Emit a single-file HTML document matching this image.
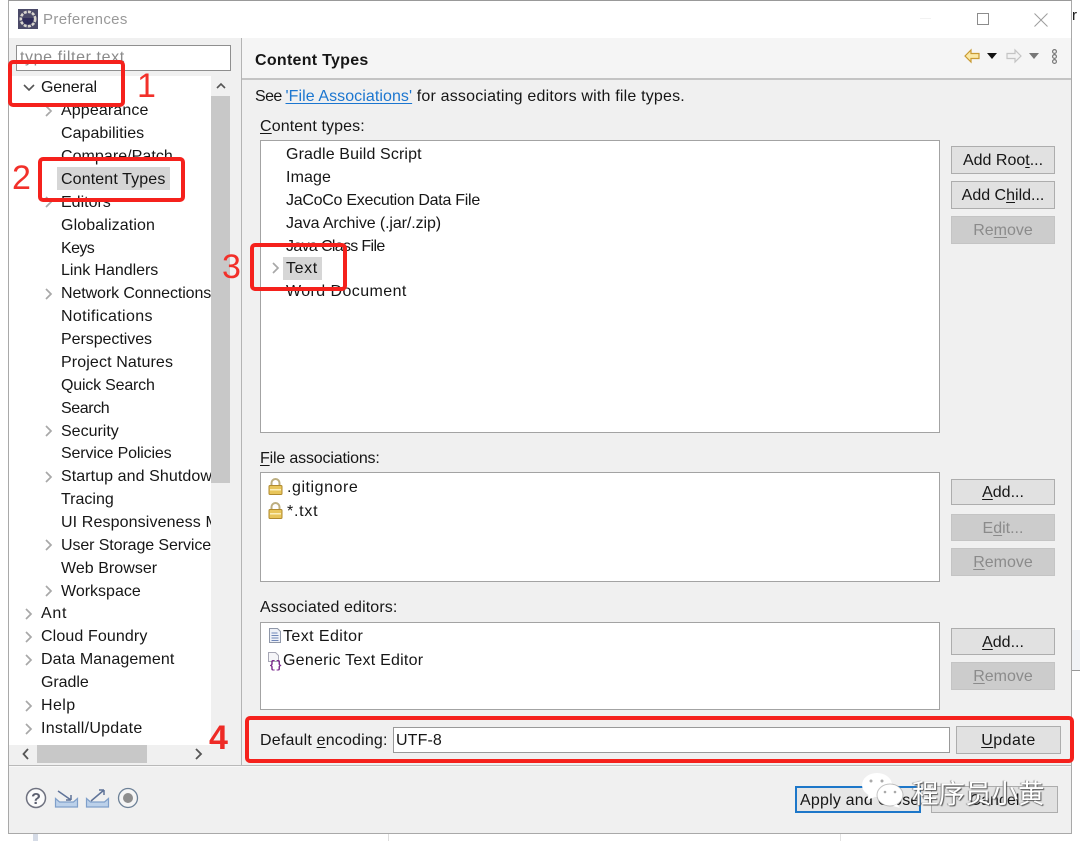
<!DOCTYPE html>
<html><head><meta charset="utf-8"><style>
html,body{margin:0;padding:0;background:#fff;width:1080px;height:841px;overflow:hidden}
body{position:relative;font-family:"Liberation Sans","Noto Sans CJK SC",sans-serif;font-size:16px;color:#161616}
.a{position:absolute;box-sizing:border-box}
.t{position:absolute;white-space:nowrap;line-height:20px;height:20px;letter-spacing:.12px;margin-top:1px}
.box{position:absolute;box-sizing:border-box;background:#fff;border:1px solid #a3a3a3}
.b{position:absolute;box-sizing:border-box;background:#e1e1e1;border:1px solid #adadad;text-align:center;line-height:27px;white-space:nowrap}
.d{background:#cccccc;border-color:#c4c4c4;color:#8b8b8b}
.r{position:absolute;box-sizing:border-box;border:4px solid #f5211c;border-radius:5px}
.n{position:absolute;color:#f2302a;font-size:34px;line-height:36px;white-space:nowrap}
svg{position:absolute;overflow:visible}
u{text-underline-offset:2px}
</style></head><body>
<!-- background behind window -->
<div class="a" style="left:33px;top:833px;width:5px;height:8px;background:#d5dbe6"></div>
<div class="a" style="left:388px;top:833px;width:1px;height:8px;background:#ddd"></div>
<div class="a" style="left:840px;top:833px;width:1px;height:8px;background:#e2e2e2"></div>
<div class="a" style="left:1072px;top:630px;width:8px;height:40px;background:#f1f3f6"></div>
<div class="a" style="left:1072px;top:670px;width:8px;height:1px;background:#999"></div>
<!-- window -->
<div class="a" style="left:8px;top:0;width:1064px;height:834px;background:#f0f0f0;border:1px solid #a9a9a9;border-top-color:#999"></div>
<div class="t" style="left:1072px;top:5px;font-size:15px">r</div>
<div class="a" style="left:9px;top:1px;width:1062px;height:37px;background:#fff"></div>
<svg style="left:18px;top:9px" width="20" height="20" viewBox="0 0 20 20"><rect width="20" height="20" fill="#4b4a68"/><circle cx="10" cy="10" r="7.2" fill="none" stroke="#d9d6cf" stroke-width="2.6" stroke-dasharray="3 1.2"/><path d="M4.500 9h11a5.500 5.500 0 0 1-11 2z" fill="#2f2c59"/></svg>
<div class="t" style="left:43px;top:9px;color:#9a9a9a;font-size:15px;letter-spacing:.35px">Preferences</div>
<div class="a" style="left:920px;top:18px;width:11px;height:1px;background:#f2f2f2"></div>
<div class="a" style="left:977px;top:13px;width:12px;height:12px;border:1px solid #8c8c8c"></div>
<svg style="left:1034px;top:13px" width="14" height="14"><path d="M.5.500l13 13M13.500.500l-13 13" stroke="#9d9d9d" fill="none"/></svg>
<!-- left pane -->
<div class="a" style="left:9px;top:38px;width:221px;height:727px;background:#f0f0f0"></div>
<div class="a" style="left:9px;top:76px;width:202px;height:669px;background:#fff"></div>
<div class="box" style="left:16px;top:45px;width:215px;height:26px;border-color:#8f8f8f"></div>
<div class="t" style="left:20px;top:47px;color:#8a8a8a;letter-spacing:.6px">type filter text</div>
<div class="a" style="left:211px;top:76px;width:19px;height:20px;background:#f0f0f0"></div>
<svg style="left:216px;top:82px" width="10" height="8"><path d="M1 6l4-4 4 4" stroke="#555" stroke-width="1.6" fill="none"/></svg>
<div class="a" style="left:211px;top:96px;width:19px;height:387px;background:#c8c8c8"></div>
<div class="a" style="left:57px;top:167px;width:113px;height:23px;background:#d6d6d6"></div>
<div class="a" style="left:9px;top:76px;width:202px;height:669px;overflow:hidden">
<svg style="left:14px;top:8px" width="12" height="8"><path d="M1 1l5 5 5-5" stroke="#555" stroke-width="1.6" fill="none"/></svg>
<div class="t" style="left:32px;top:1px;letter-spacing:-.15px">General</div>
<div class="t" style="left:52px;top:24px">Appearance</div>
<div class="t" style="left:52px;top:47px;letter-spacing:.04px">Capabilities</div>
<div class="t" style="left:52px;top:70px;letter-spacing:.05px">Compare/Patch</div>
<div class="t" style="left:52px;top:93px">Content Types</div>
<div class="t" style="left:52px;top:116px;letter-spacing:0">Editors</div>
<div class="t" style="left:52px;top:139px">Globalization</div>
<div class="t" style="left:52px;top:162px;letter-spacing:-.6px">Keys</div>
<div class="t" style="left:52px;top:184px;letter-spacing:-.05px">Link Handlers</div>
<div class="t" style="left:52px;top:207px;letter-spacing:-.1px">Network Connections</div>
<div class="t" style="left:52px;top:230px;letter-spacing:.36px">Notifications</div>
<div class="t" style="left:52px;top:253px;letter-spacing:-.05px">Perspectives</div>
<div class="t" style="left:52px;top:276px">Project Natures</div>
<div class="t" style="left:52px;top:299px;letter-spacing:-.2px">Quick Search</div>
<div class="t" style="left:52px;top:322px;letter-spacing:-.4px">Search</div>
<div class="t" style="left:52px;top:345px;letter-spacing:0">Security</div>
<div class="t" style="left:52px;top:367px;letter-spacing:-.15px">Service Policies</div>
<div class="t" style="left:52px;top:390px;letter-spacing:.08px">Startup and Shutdown</div>
<div class="t" style="left:52px;top:413px;letter-spacing:0">Tracing</div>
<div class="t" style="left:52px;top:436px">UI Responsiveness Monitoring</div>
<div class="t" style="left:52px;top:459px;letter-spacing:-.1px">User Storage Service</div>
<div class="t" style="left:52px;top:482px;letter-spacing:.04px">Web Browser</div>
<div class="t" style="left:52px;top:505px;letter-spacing:0">Workspace</div>
<div class="t" style="left:32px;top:527px;letter-spacing:.7px">Ant</div>
<div class="t" style="left:32px;top:550px">Cloud Foundry</div>
<div class="t" style="left:32px;top:573px">Data Management</div>
<div class="t" style="left:32px;top:596px;letter-spacing:-.05px">Gradle</div>
<div class="t" style="left:32px;top:619px;letter-spacing:.4px">Help</div>
<div class="t" style="left:32px;top:642px;letter-spacing:.26px">Install/Update</div>
<svg style="left:0;top:1px" width="202" height="669"><g stroke="#a8a8a8" stroke-width="1.7" fill="none"><path d="M37 29l5 5-5 5M37 120l5 5-5 5M37 212l5 5-5 5M37 349l5 5-5 5M37 395l5 5-5 5M37 463l5 5-5 5M37 509l5 5-5 5M17 532l5 5-5 5M17 555l5 5-5 5M17 578l5 5-5 5M17 624l5 5-5 5M17 647l5 5-5 5"/></g></svg>
</div>
<div class="a" style="left:9px;top:745px;width:221px;height:20px;background:#f0f0f0"></div>
<div class="a" style="left:37px;top:745px;width:110px;height:18px;background:#c8c8c8"></div>
<svg style="left:22px;top:748px" width="190" height="12"><path d="M6 1L1.500 6 6 11M174 1l5 5-5 5" stroke="#555" stroke-width="1.8" fill="none"/></svg>
<!-- sash / right pane -->
<div class="a" style="left:241px;top:38px;width:1px;height:727px;background:#b4b4b4"></div>
<div class="a" style="left:242px;top:38px;width:829px;height:41px;background:#f5f5f5"></div>
<div class="a" style="left:242px;top:78px;width:829px;height:2px;background:#c4c4c4"></div>
<div class="t" style="left:255px;top:50px;font-weight:bold;letter-spacing:.28px">Content Types</div>
<svg style="left:964px;top:49px" width="16" height="14" viewBox="0 0 16 14"><path d="M1 7l6-6v3.500h8v5H7V13z" fill="#fbe9a7" stroke="#c99a33" stroke-width="1.200"/></svg>
<svg style="left:987px;top:53px" width="10" height="6"><path d="M0 0h10L5 6z" fill="#111"/></svg>
<svg style="left:1006px;top:49px" width="16" height="14" viewBox="0 0 16 14"><path d="M15 7L9 1v3.500H1v5h8V13z" fill="#f3f3f3" stroke="#c4c4c4" stroke-width="1.200"/></svg>
<svg style="left:1029px;top:53px" width="10" height="6"><path d="M0 0h10L5 6z" fill="#777"/></svg>
<svg style="left:1051px;top:49px" width="7" height="15"><g fill="none" stroke="#777" stroke-width="1.200"><circle cx="3.500" cy="2.500" r="1.900"/><circle cx="3.500" cy="7.500" r="1.900"/><circle cx="3.500" cy="12.500" r="1.900"/></g></svg>
<div class="t" style="left:255px;top:86px;letter-spacing:.19px"><span style="letter-spacing:-.6px">See </span><span style="color:#1b76d0;text-decoration:underline;text-underline-offset:2px;letter-spacing:.07px">'File Associations'</span> for associating editors with file types.</div>
<div class="t" style="left:260px;top:116px"><u>C</u>ontent types:</div>
<div class="box" style="left:260px;top:140px;width:680px;height:293px"></div>
<div class="t" style="left:286px;top:144px">Gradle Build Script</div>
<div class="t" style="left:286px;top:167px">Image</div>
<div class="t" style="left:286px;top:190px;letter-spacing:-.27px">JaCoCo Execution Data File</div>
<div class="t" style="left:286px;top:213px;letter-spacing:-.1px">Java Archive (.jar/.zip)</div>
<div class="t" style="left:286px;top:236px;letter-spacing:-.66px">Java Class File</div>
<div class="a" style="left:283px;top:257px;width:39px;height:23px;background:#d6d6d6"></div>
<div class="t" style="left:286px;top:258px;letter-spacing:.6px">Text</div>
<svg style="left:272px;top:262px" width="8" height="12"><path d="M1 1l5 5-5 5" stroke="#a8a8a8" stroke-width="1.700" fill="none"/></svg>
<div class="t" style="left:286px;top:281px;letter-spacing:.42px">Word Document</div>
<div class="b" style="left:951px;top:146px;width:104px;height:28px">Add Roo<u>t</u>...</div>
<div class="b" style="left:951px;top:181px;width:104px;height:28px">Add C<u>h</u>ild...</div>
<div class="b d" style="left:951px;top:216px;width:104px;height:28px">Re<u>m</u>ove</div>
<div class="t" style="left:260px;top:448px;letter-spacing:-.17px"><u>F</u>ile associations:</div>
<div class="box" style="left:260px;top:472px;width:680px;height:110px"></div>
<svg style="left:268px;top:478px" width="15" height="17" viewBox="0 0 15 17"><path d="M3.500 9V5a4 4 0 0 1 8 0v4" fill="none" stroke="#bcae80" stroke-width="2"/><rect x="1" y="7.500" width="13" height="9" rx="1" fill="#e8c55a" stroke="#b08a2e"/><rect x="2" y="11" width="11" height="1.500" fill="#fbeeb8"/></svg>
<svg style="left:268px;top:502px" width="15" height="17" viewBox="0 0 15 17"><path d="M3.500 9V5a4 4 0 0 1 8 0v4" fill="none" stroke="#bcae80" stroke-width="2"/><rect x="1" y="7.500" width="13" height="9" rx="1" fill="#e8c55a" stroke="#b08a2e"/><rect x="2" y="11" width="11" height="1.500" fill="#fbeeb8"/></svg>
<div class="t" style="left:287px;top:477px;letter-spacing:.55px">.gitignore</div>
<div class="t" style="left:287px;top:501px;letter-spacing:.75px">*.txt</div>
<div class="b" style="left:951px;top:479px;width:104px;height:26px;line-height:26px"><u>A</u>dd...</div>
<div class="b d" style="left:951px;top:514px;width:104px;height:27px"><span>E<u>d</u>it...</span></div>
<div class="b d" style="left:951px;top:548px;width:104px;height:28px"><u>R</u>emove</div>
<div class="t" style="left:260px;top:597px">Associated editors:</div>
<div class="box" style="left:260px;top:622px;width:680px;height:88px"></div>
<svg style="left:269px;top:628px" width="12" height="15" viewBox="0 0 12 15"><path d="M.5.500h8l3 3v11H.5z" fill="#eef1f8" stroke="#8f97a8"/><path d="M2.500 5h6M2.500 7.500h7M2.500 10h7M2.500 12.500h7" stroke="#6f86b8"/></svg>
<svg style="left:266px;top:652px" width="17" height="17" viewBox="0 0 17 17"><path d="M2.500.500h7l3 3v6h-10z" fill="#f5f5f8" stroke="#a7a7b5"/><text x="3" y="16" font-family="Liberation Mono,monospace" font-size="11" font-weight="bold" fill="#7b2a8c">{}</text></svg>
<div class="t" style="left:283px;top:626px;letter-spacing:.42px">Text Editor</div>
<div class="t" style="left:283px;top:650px;letter-spacing:.24px">Generic Text Editor</div>
<div class="b" style="left:951px;top:628px;width:104px;height:27px"><u>A</u>dd...</div>
<div class="b d" style="left:951px;top:662px;width:104px;height:28px"><u>R</u>emove</div>
<div class="t" style="left:260px;top:730px;letter-spacing:.18px">Default <u>e</u>ncoding:</div>
<div class="box" style="left:393px;top:727px;width:557px;height:26px;border-color:#999"></div>
<div class="t" style="left:396px;top:730px">UTF-8</div>
<div class="b" style="left:956px;top:726px;width:105px;height:28px;letter-spacing:.5px"><u>U</u>pdate</div>
<!-- bottom -->
<div class="a" style="left:9px;top:765px;width:1062px;height:1px;background:#b9b9b9"></div>
<div class="a" style="left:9px;top:766px;width:1062px;height:1px;background:#f8f8f8"></div>
<svg style="left:25px;top:787px" width="115" height="23" viewBox="0 0 115 23"><circle cx="11" cy="11" r="9.500" fill="#fbfbfb" stroke="#6f7280" stroke-width="1.500"/><text x="11" y="17" text-anchor="middle" font-size="16" font-weight="bold" fill="#5c6070" font-family="Liberation Sans,sans-serif">?</text>
<path d="M30.500 11.500l4 3.500h14l4-3.500v8.500h-22z" fill="#bcd1ea" stroke="#7f9fca" stroke-width="1.200"/><path d="M33 4l13 9M46 13h-5M46 13V8" fill="none" stroke="#5f7398" stroke-width="1.500"/>
<path d="M61.500 11.500l4 3.500h14l4-3.500v8.500h-22z" fill="#bcd1ea" stroke="#7f9fca" stroke-width="1.200"/><path d="M66 14L79 3M79 3h-5M79 3v5" fill="none" stroke="#5f7398" stroke-width="1.500"/>
<circle cx="103" cy="11" r="9.500" fill="#f5f5f5" stroke="#6d8197" stroke-width="1.300"/><circle cx="103" cy="11" r="5" fill="#8e8e8e"/></svg>
<div class="b" style="left:795px;top:786px;width:126px;height:27px;border:2px solid #1d77c9;background:#e6e6e6;line-height:26px;text-align:left;padding-left:3px;letter-spacing:.2px;color:#161616">Apply and Close</div>
<div class="b" style="left:931px;top:786px;width:127px;height:27px;">Cancel</div>
<!-- watermark -->
<svg style="left:861px;top:772px" width="48" height="38" viewBox="0 0 48 38"><ellipse cx="16" cy="13" rx="15" ry="12" fill="#fff"/><path d="M8 22l-2 6 8-3z" fill="#fff"/><ellipse cx="29" cy="23" rx="13" ry="11" fill="#fff" stroke="#999" stroke-opacity=".6"/><path d="M36 32l3 4-7-2z" fill="#fff"/><circle cx="10" cy="9" r="1.500" fill="#aaa"/><circle cx="21" cy="9" r="1.500" fill="#aaa"/><circle cx="24" cy="20" r="1.300" fill="#aaa"/><circle cx="34" cy="20" r="1.300" fill="#aaa"/></svg>
<div class="t" style="left:912px;top:778px;height:30px;line-height:30px;font-size:26.500px;letter-spacing:0;color:#fff;font-family:'Liberation Sans','Noto Sans CJK SC',sans-serif;text-shadow:1px 1px 1px #555,-1px 0 1px #888">程序员小黄</div>
<!-- annotations -->
<div class="r" style="left:8px;top:60px;width:117px;height:47px"></div>
<div class="r" style="left:38px;top:157px;width:147px;height:45px"></div>
<div class="r" style="left:250px;top:243px;width:97px;height:48px"></div>
<div class="r" style="left:245px;top:716px;width:829px;height:47px"></div>
<div class="n" style="left:137px;top:68px">1</div>
<div class="n" style="left:12px;top:160px">2</div>
<div class="n" style="left:222px;top:249px">3</div>
<div class="n" style="left:209px;top:720px;font-weight:bold;font-size:34px;color:#ee2b26">4</div>
</body></html>
